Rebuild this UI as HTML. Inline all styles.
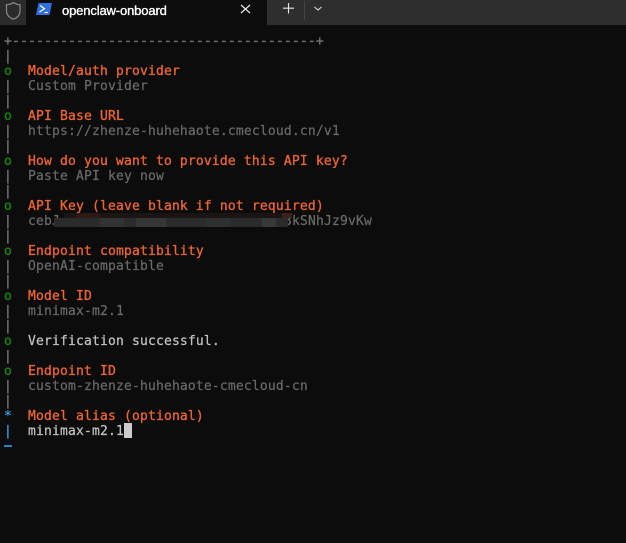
<!DOCTYPE html>
<html><head><meta charset="utf-8"><style>
html,body{margin:0;padding:0;background:#0c0c0c;width:626px;height:543px;overflow:hidden}
.bar{position:absolute;left:0;top:0;width:626px;height:25px;background:#2e2e2e}
.shield{position:absolute;left:0;top:0;width:26px;height:25px;background:#2b2b2b;border-bottom-right-radius:4px}
.tab{position:absolute;left:26px;top:0;width:241px;height:25px;background:#0c0c0c}
.title{position:absolute;left:62px;top:3px;font:13px/16px "Liberation Sans",sans-serif;color:#fff;letter-spacing:-.14px;-webkit-text-stroke:.35px #fff}
.l{position:absolute;white-space:pre;font:13px/15px "DejaVu Sans Mono",monospace;letter-spacing:.17px;height:15px;margin-top:1px}
.o{color:#f0642c;-webkit-text-stroke:.3px #f0642c}.g{color:#6a6a6a;-webkit-text-stroke:.2px #6a6a6a}.w{color:#c4c4c4;-webkit-text-stroke:.2px #c4c4c4}.p{color:#747474;-webkit-text-stroke:.3px #747474}.gr{color:#108a0c;-webkit-text-stroke:.3px #108a0c}.b{color:#3a96dd;-webkit-text-stroke:.3px #3a96dd}
.m{position:absolute;height:9px;top:218px;width:12px}
.t{position:absolute;height:5px;top:213px;width:12px}
</style></head><body>
<div class="bar"></div><div class="shield"></div><div class="tab"></div>
<svg style="position:absolute;left:0;top:0" width="626" height="26" fill="none">
<path d="M13.500 2.500C11.500 4 9.500 4.700 6.500 4.700V10.500C6.500 15 9.500 17.700 13.500 19.200C17.500 17.700 20 15 20 10.500V4.700C17.500 4.700 15.500 4 13.500 2.500Z" stroke="#8a8a8a" stroke-width="1.200"/>
<path d="M38.500 3H52L49.500 15H36Z" fill="#2f6fe0"/><path d="M40 5.500L44.500 8.700L39.500 12" stroke="#fff" stroke-width="1.200"/><path d="M44.500 12.500H48" stroke="#fff" stroke-width="1.100"/>
<path d="M241 5L250 13M250 5L241 13" stroke="#e8e8e8" stroke-width="1.200"/>
<path d="M288.500 3V13.500M283 8.200H294" stroke="#e8e8e8" stroke-width="1.100"/>
<path d="M304.500 1V20" stroke="#454545" stroke-width="1"/>
<path d="M314.500 7L318 10L321.500 7" stroke="#dcdcdc" stroke-width="1.100"/>
</svg>
<div class="title">openclaw-onboard</div>
<div class="l p" style="left:4px;top:33px">+--------------------------------------+</div>
<div class="l p" style="left:4px;top:48px">|</div>
<div class="l gr" style="left:4px;top:63px">o</div><div class="l o" style="left:28px;top:63px">Model/auth provider</div>
<div class="l p" style="left:4px;top:78px">|</div><div class="l g" style="left:28px;top:78px">Custom Provider</div>
<div class="l p" style="left:4px;top:93px">|</div>
<div class="l gr" style="left:4px;top:108px">o</div><div class="l o" style="left:28px;top:108px">API Base URL</div>
<div class="l p" style="left:4px;top:123px">|</div><div class="l g" style="left:28px;top:123px">https://zhenze-huhehaote.cmecloud.cn/v1</div>
<div class="l p" style="left:4px;top:138px">|</div>
<div class="l gr" style="left:4px;top:153px">o</div><div class="l o" style="left:28px;top:153px">How do you want to provide this API key?</div>
<div class="l p" style="left:4px;top:168px">|</div><div class="l g" style="left:28px;top:168px">Paste API key now</div>
<div class="l p" style="left:4px;top:183px">|</div>
<div class="l gr" style="left:4px;top:198px">o</div><div class="l o" style="left:28px;top:198px">API Key (leave blank if not required)</div>
<div class="l p" style="left:4px;top:213px">|</div><div class="l g" style="left:28px;top:213px">cebJ</div><div class="l g" style="left:284px;top:213px">3kSNhJz9vKw</div>
<div class="t" style="left:64px;width:224px;background:#1a1412"></div>
<div class="t" style="left:76px;width:24px;background:#2a1b15"></div>
<div class="t" style="left:282px;width:10px;background:#3a2218"></div>
<div class="m" style="left:54px;width:234px;background:#2b2b2b"></div>
<div class="m" style="left:100px;width:24px;background:#333"></div>
<div class="m" style="left:136px;width:30px;background:#363636"></div>
<div class="m" style="left:206px;width:24px;background:#303030"></div>
<div class="m" style="left:262px;width:14px;background:#383838"></div>
<div class="l p" style="left:4px;top:228px">|</div>
<div class="l gr" style="left:4px;top:243px">o</div><div class="l o" style="left:28px;top:243px">Endpoint compatibility</div>
<div class="l p" style="left:4px;top:258px">|</div><div class="l g" style="left:28px;top:258px">OpenAI-compatible</div>
<div class="l p" style="left:4px;top:273px">|</div>
<div class="l gr" style="left:4px;top:288px">o</div><div class="l o" style="left:28px;top:288px">Model ID</div>
<div class="l p" style="left:4px;top:303px">|</div><div class="l g" style="left:28px;top:303px">minimax-m2.1</div>
<div class="l p" style="left:4px;top:318px">|</div>
<div class="l gr" style="left:4px;top:333px">o</div><div class="l w" style="left:28px;top:333px">Verification successful.</div>
<div class="l p" style="left:4px;top:348px">|</div>
<div class="l gr" style="left:4px;top:363px">o</div><div class="l o" style="left:28px;top:363px">Endpoint ID</div>
<div class="l p" style="left:4px;top:378px">|</div><div class="l g" style="left:28px;top:378px">custom-zhenze-huhehaote-cmecloud-cn</div>
<div class="l p" style="left:4px;top:393px">|</div>
<div class="l b" style="left:4px;top:408px">*</div><div class="l o" style="left:28px;top:408px">Model alias (optional)</div>
<div class="l b" style="left:4px;top:423px">|</div><div class="l w" style="left:28px;top:423px">minimax-m2.1</div>
<div style="position:absolute;left:124px;top:423px;width:8px;height:15px;background:#cccccc"></div>
<div style="position:absolute;left:4px;top:445px;width:8px;height:2px;background:#2f7fc0"></div>
</body></html>
